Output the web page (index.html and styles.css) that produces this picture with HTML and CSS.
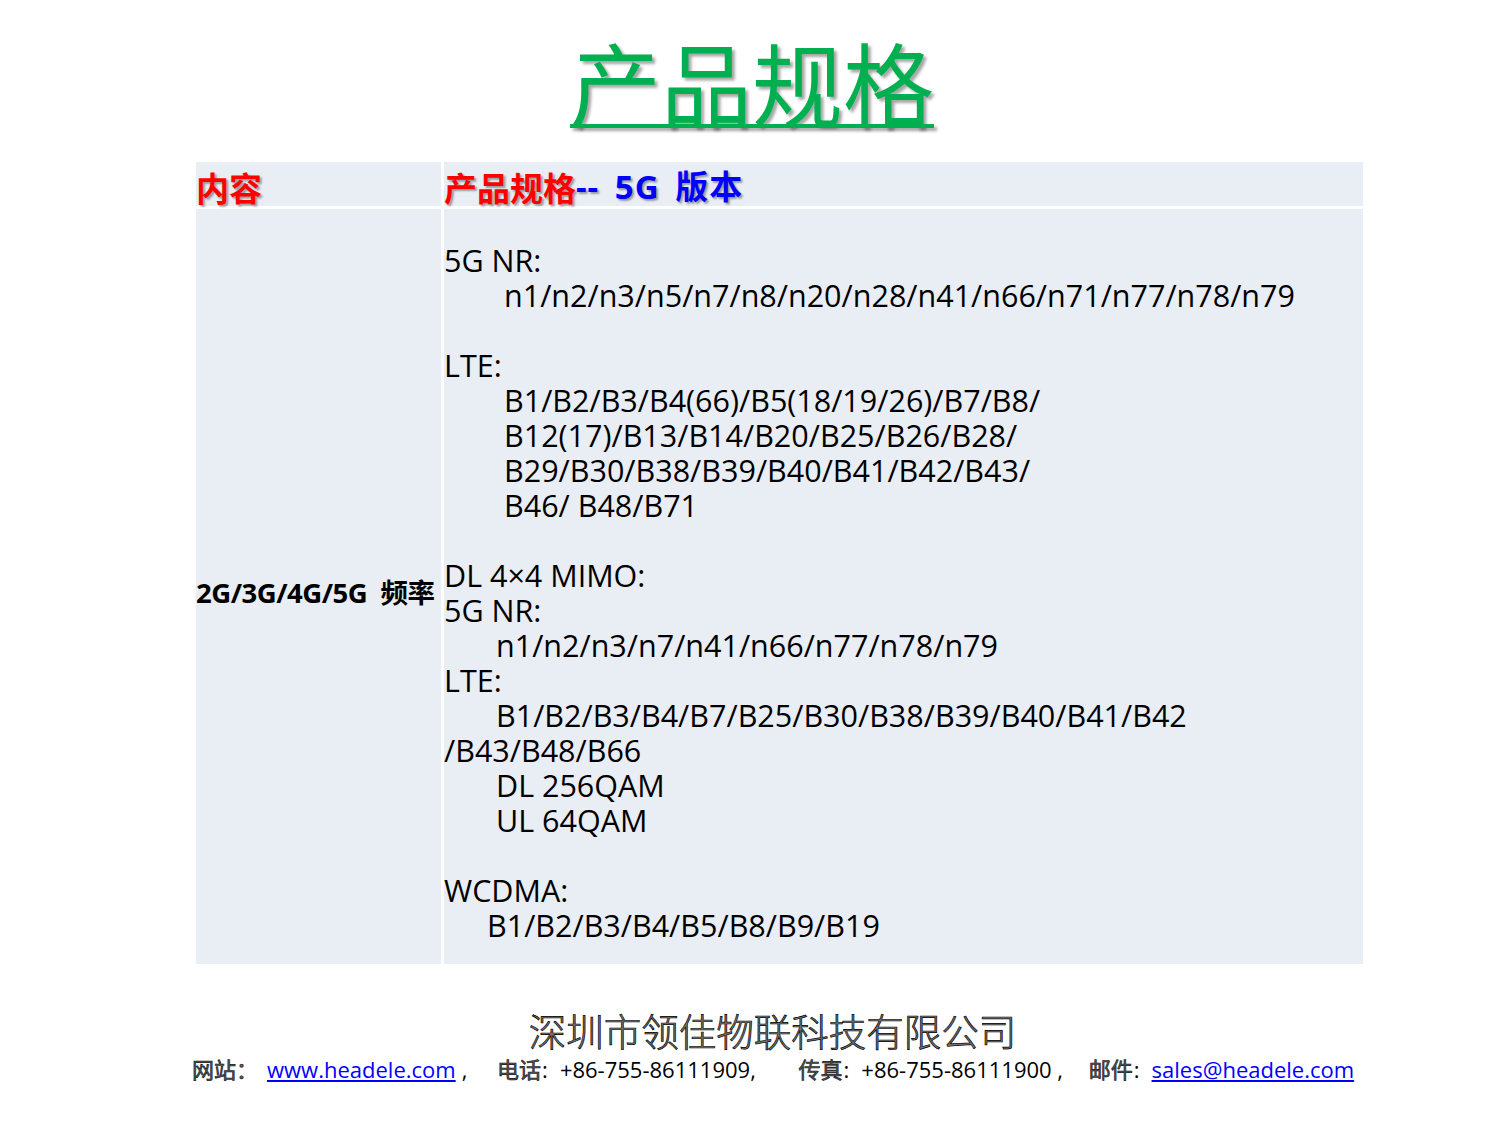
FILE: index.html
```html
<!DOCTYPE html>
<html lang="zh">
<head>
<meta charset="utf-8">
<title>产品规格</title>
<link rel="stylesheet" href="styles.css">
</head>
<body>
<div class="page">
  <h1 class="title"><span class="title-text">产品规格</span></h1>
  <div class="spec">
    <div class="cell head"><span class="red">内容</span></div>
    <div class="cell head"><span class="red">产品规格</span><span class="blue">-- 5G 版本</span></div>
    <div class="cell label">2G/3G/4G/5G&nbsp;&nbsp;频率</div>
    <div class="cell body">
      <div class="ln">5G NR:</div>
      <div class="ln i1">n1/n2/n3/n5/n7/n8/n20/n28/n41/n66/n71/n77/n78/n79</div>
      <div class="ln">&nbsp;</div>
      <div class="ln">LTE:</div>
      <div class="ln i1">B1/B2/B3/B4(66)/B5(18/19/26)/B7/B8/</div>
      <div class="ln i1">B12(17)/B13/B14/B20/B25/B26/B28/</div>
      <div class="ln i1">B29/B30/B38/B39/B40/B41/B42/B43/</div>
      <div class="ln i1">B46/ B48/B71</div>
      <div class="ln">&nbsp;</div>
      <div class="ln">DL 4×4 MIMO:</div>
      <div class="ln">5G NR:</div>
      <div class="ln i2">n1/n2/n3/n7/n41/n66/n77/n78/n79</div>
      <div class="ln">LTE:</div>
      <div class="ln i2">B1/B2/B3/B4/B7/B25/B30/B38/B39/B40/B41/B42</div>
      <div class="ln">/B43/B48/B66</div>
      <div class="ln i2">DL 256QAM</div>
      <div class="ln i2">UL 64QAM</div>
      <div class="ln">&nbsp;</div>
      <div class="ln">WCDMA:</div>
      <div class="ln i3">B1/B2/B3/B4/B5/B8/B9/B19</div>
    </div>
  </div>
  <div class="footer">
    <div class="company">深圳市领佳物联科技有限公司</div>
    <div class="contact">
      <span class="cjk lead">网站：</span><a class="link" href="#">www.headele.com</a><span class="sep">,</span>
      <span class="cjk gap">电话</span><span class="colon">:</span><span>+86-755-86111909,</span>
      <span class="cjk gap3">传真</span><span class="colon">:</span><span>+86-755-86111900 ,</span>
      <span class="cjk gap2">邮件</span><span class="colon">:</span><a class="link" href="#">sales@headele.com</a>
    </div>
  </div>
</div>
</body>
</html>
```

FILE: styles.css
```css
html, body {
  margin: 0;
  padding: 0;
  background: #ffffff;
}

.page {
  width: 1500px;
  height: 1125px;
  font-family: "Open Sans", "Noto Sans CJK SC", sans-serif;
  color: #000;
}

.title {
  margin: 0;
  padding-top: 30px;
  height: 162px;
  box-sizing: border-box;
  text-align: center;
  font-family: "Noto Sans CJK SC", sans-serif;
  font-weight: 400;
  font-size: 91px;
  line-height: 100px;
  color: #00b050;
}

.title-text {
  text-decoration: underline;
  text-decoration-thickness: 4px;
  text-underline-offset: 4px;
  text-decoration-color: #00b050;
  text-shadow: 3px 3px 3px rgba(0, 0, 0, 0.35);
  padding-left: 4px;
}

.spec {
  margin-left: 196px;
  width: 1167px;
  display: grid;
  grid-template-columns: 245px 919px;
  grid-template-rows: 44px 755px;
  column-gap: 3px;
  row-gap: 3px;
}

.cell {
  background: #e9edf4;
}

.head {
  display: flex;
  align-items: center;
  font-family: "Noto Sans CJK SC", sans-serif;
  font-weight: 700;
  font-size: 33px;
  line-height: 44px;
  padding-top: 6px;
  box-sizing: border-box;
  text-shadow: 2px 2px 2px rgba(0, 0, 0, 0.35);
  white-space: pre;
}

.head .red { color: #ff0000; }
.head .blue {
  color: #0000ff;
  font-family: "Open Sans", "Noto Sans CJK SC", sans-serif;
  font-weight: 700;
  letter-spacing: 1px;
  word-spacing: 6px;
}

.label {
  display: flex;
  align-items: center;
  font-weight: 700;
  font-size: 27.5px;
  padding-top: 8px;
  box-sizing: border-box;
  white-space: nowrap;
  letter-spacing: -0.5px;
}

.body {
  padding-top: 34px;
  font-size: 30.5px;
  line-height: 35px;
}

.ln { white-space: nowrap; }
.i1 { padding-left: 60px; }
.i2 { padding-left: 52px; }
.i3 { padding-left: 43px; }

.footer {
  padding-top: 44px;
}

.company {
  text-align: center;
  padding-left: 45px;
  font-family: "Noto Sans CJK SC", sans-serif;
  font-size: 37.5px;
  font-weight: 300;
  line-height: 44px;
  color: #777;
  -webkit-text-stroke: 0.7px #000;
}

.contact {
  margin-left: 192px;
  font-size: 22px;
  line-height: 32px;
  white-space: nowrap;
}

.cjk {
  font-family: "Noto Sans CJK SC", sans-serif;
  color: #555;
  -webkit-text-stroke: 0.6px #111;
}

.lead { margin-right: 9px; }

.link {
  color: #0000ff;
  text-decoration: underline;
}

.colon { margin-right: 12px; margin-left: 1px; }
.sep { margin-left: 6px; }
.gap { margin-left: 24px; }
.gap3 { margin-left: 37px; }
.gap2 { margin-left: 20px; }
```
